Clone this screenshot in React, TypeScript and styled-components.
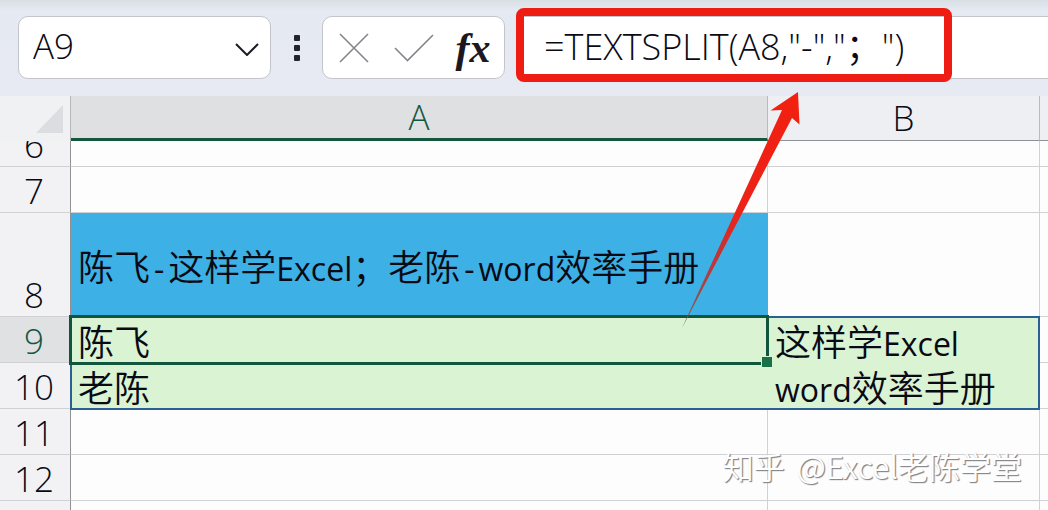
import React from "react";
import styled, { createGlobalStyle, css } from "styled-components";

const LATIN = `"Open Sans", "Noto Sans", "Noto Sans CJK SC", sans-serif`;
const HAN = `"Noto Sans CJK SC", "Open Sans", sans-serif`;

const GlobalStyle = createGlobalStyle`
  * { box-sizing: border-box; }
  body { margin: 0; background: #fdfdfe; }
  button, input { font: inherit; color: inherit; margin: 0; }
`;

const Page = styled.main`
  position: relative;
  height: 100vh;
  overflow: hidden;
  font-family: ${LATIN};
  font-weight: 350;
  color: #0a0a14;
`;

const Toolbar = styled.header`
  display: flex;
  align-items: stretch;
  height: 96px;
  padding: 16px 0 17px 18px;
  background: linear-gradient(#d9e0e5 0, #e5e9f1 10px, #e7eaf3 100%);
`;

const field = css`
  background: #fff;
  border: 1px solid #c3c5cb;
  border-radius: 10px;
`;

const NameBox = styled.div`
  ${field}
  display: flex;
  align-items: center;
  width: 253px;
  padding: 0 8px 0 14px;
`;

const NameInput = styled.input`
  flex: 1;
  min-width: 0;
  border: 0;
  padding: 0 0 4px;
  outline: 0;
  background: none;
  font-size: 35px;
`;

const IconButton = styled.button<{ $width: number }>`
  display: flex;
  align-items: center;
  justify-content: center;
  width: ${(p) => p.$width}px;
  padding: 0;
  border: 0;
  background: none;
`;

const Grip = styled.div`
  display: flex;
  flex-direction: column;
  align-items: center;
  justify-content: center;
  gap: 4px;
  width: 51px;
`;

const GripDot = styled.span`
  width: 6px;
  height: 6px;
  border-radius: 1px;
  background: #22242f;
`;

const Actions = styled.div`
  ${field}
  display: flex;
  align-items: stretch;
  justify-content: space-between;
  width: 183px;
  padding: 0 6px;
`;

const Fx = styled.span`
  font: italic bold 42px/48px "Liberation Serif", serif;
  color: #1d1722;
`;

const FormulaArea = styled.div`
  position: relative;
  flex: 1;
  display: flex;
  margin-left: 12px;
  background: #fff;
  border: solid #c3c5cb;
  border-width: 1px 0;
`;

const FormulaInput = styled.input`
  flex: 1;
  min-width: 0;
  border: 0;
  outline: 0;
  padding: 0 0 6px 27px;
  background: none;
  font-size: 36px;
`;

const Highlight = styled.div`
  position: absolute;
  top: -9px;
  left: -1px;
  width: 436px;
  height: 74px;
  border: 8px solid #ee1c12;
  border-radius: 8px;
  pointer-events: none;
`;

const Sheet = styled.table`
  width: 100%;
  table-layout: fixed;
  border-collapse: separate;
  border-spacing: 0;
`;

const Col = styled.col<{ $width?: number }>`
  width: ${(p) => (p.$width ? `${p.$width}px` : "auto")};
`;

const Corner = styled.td`
  height: 45px;
  padding: 0;
  background: #f0f1f3;
  border-right: 1px solid #b5b6ba;
`;

const CornerMark = styled.svg`
  display: block;
  margin: 1px 0 0 36px;
`;

const ColumnHead = styled.th<{ $active?: boolean }>`
  height: 45px;
  padding: 0;
  font-weight: 350;
  font-size: 35px;
  line-height: 40px;
  background: ${(p) => (p.$active ? "#dfe0e2" : "#eeeff2")};
  color: ${(p) => (p.$active ? "#14573e" : "inherit")};
  border-right: 1px solid #b9bbc0;
  border-bottom: ${(p) => (p.$active ? "3px solid #15573d" : "1px solid #8f9195")};

  &:last-child {
    border-right: 0;
  }
`;

const RowHead = styled.th<{ $active?: boolean }>`
  padding: 0;
  vertical-align: bottom;
  font-weight: 350;
  font-size: 35px;
  background: ${(p) => (p.$active ? "#dfe1e3" : "#f2f2f4")};
  color: ${(p) => (p.$active ? "#14573e" : "inherit")};
  border-right: 1px solid #8f9195;
  border-bottom: 1px solid #d0d1d5;
`;

const RowLabel = styled.div<{ $height: number; $clip?: boolean }>`
  display: flex;
  align-items: flex-end;
  justify-content: center;
  height: ${(p) => p.$height}px;
  padding-right: 2px;
  overflow: ${(p) => (p.$clip ? "hidden" : "visible")};
  line-height: 42px;
`;

const fills = { none: "transparent", blue: "#3db0e5", green: "#d9f3d3" };

const Cell = styled.td<{ $fill?: keyof typeof fills }>`
  position: relative;
  padding: 0 0 0 7px;
  background: ${(p) => fills[p.$fill ?? "none"]};
  border: solid ${(p) => (p.$fill ? fills[p.$fill] : "#d0d1d5")};
  border-width: 0 1px 1px 0;
  font-family: ${HAN};
  font-size: 36px;
  line-height: 44px;
  white-space: nowrap;

  &:last-child {
    border-right: 0;
  }
`;

const Latin = styled.span`
  font-family: ${LATIN};
  font-size: 32px;
  font-weight: 400;
  line-height: 1;
`;

const Dash = styled(Latin)`
  padding: 0 4px;
`;

const SpillOutline = styled.div`
  position: absolute;
  z-index: 1;
  top: -1px;
  left: -1px;
  width: 970px;
  height: 94px;
  border: 2px solid #2c5f92;
  pointer-events: none;
`;

const Selection = styled.div`
  position: absolute;
  z-index: 2;
  inset: -2px -2px -3px -2px;
  border: 3px solid #10553c;
  pointer-events: none;
`;

const FillHandle = styled.span`
  position: absolute;
  right: -6px;
  bottom: -5px;
  width: 11px;
  height: 11px;
  background: #1a7047;
  border: solid #d9f3d3;
  border-width: 1px 0 0 1px;
`;

const Arrow = styled.svg`
  position: absolute;
  z-index: 3;
  top: 90px;
  left: 680px;
  pointer-events: none;
`;

const Watermark = styled.p`
  position: absolute;
  z-index: 4;
  right: 26px;
  bottom: 22px;
  display: flex;
  gap: 12px;
  margin: 0;
  font: 350 31px/44px ${HAN};
  color: #fff;
  text-shadow: 1px 1px 1px #85868a, 1px 1px 1px #a5a6aa;
`;

type Fill = keyof typeof fills;
type Row = { n: number; h: number; fill?: Fill; fillB?: Fill; a?: React.ReactNode; b?: React.ReactNode };

const rows: Row[] = [
  { n: 6, h: 25 },
  { n: 7, h: 45 },
  {
    n: 8,
    h: 103,
    fill: "blue",
    a: (
      <>
        陈飞<Dash>-</Dash>这样学<Latin>Excel</Latin>；老陈<Dash>-</Dash>
        <Latin>word</Latin>效率手册
      </>
    ),
  },
  { n: 9, h: 45, fill: "green", fillB: "green", a: "陈飞", b: <>这样学<Latin>Excel</Latin></> },
  { n: 10, h: 45, fill: "green", fillB: "green", a: "老陈", b: <><Latin>word</Latin>效率手册</> },
  { n: 11, h: 45 },
  { n: 12, h: 45 },
  { n: 13, h: 45 },
];

export default function App() {
  return (
    <Page>
      <GlobalStyle />
      <Toolbar>
        <NameBox>
          <NameInput aria-label="Name box" defaultValue="A9" />
          <IconButton $width={30} aria-label="Show names">
            <svg width="26" height="16" viewBox="0 0 26 16" fill="none" stroke="#1c1c26" strokeWidth="2">
              <path d="M2 4 13 15 24 4" />
            </svg>
          </IconButton>
        </NameBox>
        <Grip>
          <GripDot />
          <GripDot />
          <GripDot />
        </Grip>
        <Actions>
          <IconButton $width={50} aria-label="Cancel">
            <svg width="30" height="30" viewBox="0 0 30 30" fill="none" stroke="#85868b" strokeWidth="1.6">
              <path d="M1 1 29 29M29 1 1 29" />
            </svg>
          </IconButton>
          <IconButton $width={58} aria-label="Enter">
            <svg width="40" height="28" viewBox="0 0 40 28" fill="none" stroke="#85868b" strokeWidth="1.6">
              <path d="M1 14 13.500 26.500 39 1" />
            </svg>
          </IconButton>
          <IconButton $width={50} aria-label="Insert function">
            <Fx>fx</Fx>
          </IconButton>
        </Actions>
        <FormulaArea>
          <FormulaInput aria-label="Formula" defaultValue={'=TEXTSPLIT(A8,"-","；")'} />
          <Highlight />
        </FormulaArea>
      </Toolbar>

      <Sheet>
        <colgroup>
          <Col $width={71} />
          <Col $width={697} />
          <Col $width={272} />
          <Col />
        </colgroup>
        <thead>
          <tr>
            <Corner>
              <CornerMark width="28" height="28" viewBox="0 0 28 28">
                <path d="M27 0V28H0Z" fill="#dcdde0" />
              </CornerMark>
            </Corner>
            <ColumnHead scope="col" $active>A</ColumnHead>
            <ColumnHead scope="col">B</ColumnHead>
            <ColumnHead />
          </tr>
        </thead>
        <tbody>
          {rows.map((r) => (
            <tr key={r.n}>
              <RowHead scope="row" $active={r.n === 9}>
                <RowLabel $height={r.h} $clip={r.n === 6}>{r.n}</RowLabel>
              </RowHead>
              <Cell $fill={r.fill}>
                {r.a}
                {r.n === 9 && (
                  <>
                    <SpillOutline />
                    <Selection>
                      <FillHandle />
                    </Selection>
                  </>
                )}
              </Cell>
              <Cell $fill={r.fillB}>{r.b}</Cell>
              <Cell />
            </tr>
          ))}
        </tbody>
      </Sheet>

      <Arrow width="124" height="240" viewBox="0 0 124 240" aria-hidden="true">
        <defs>
          <linearGradient id="shaft" x1="0" y1="0" x2="0" y2="1">
            <stop offset="0" stopColor="#f2200f" />
            <stop offset="0.5" stopColor="#ec2318" />
            <stop offset="0.75" stopColor="#b83a3c" />
            <stop offset="1" stopColor="#7c5a50" />
          </linearGradient>
        </defs>
        <path d="M118 2 90.500 20.500 102 20 2 238 112 28 119.500 34.500Z" fill="url(#shaft)" />
      </Arrow>
      <Watermark>
        <span>知乎</span>
        <span>@Excel老陈学堂</span>
      </Watermark>
    </Page>
  );
}
